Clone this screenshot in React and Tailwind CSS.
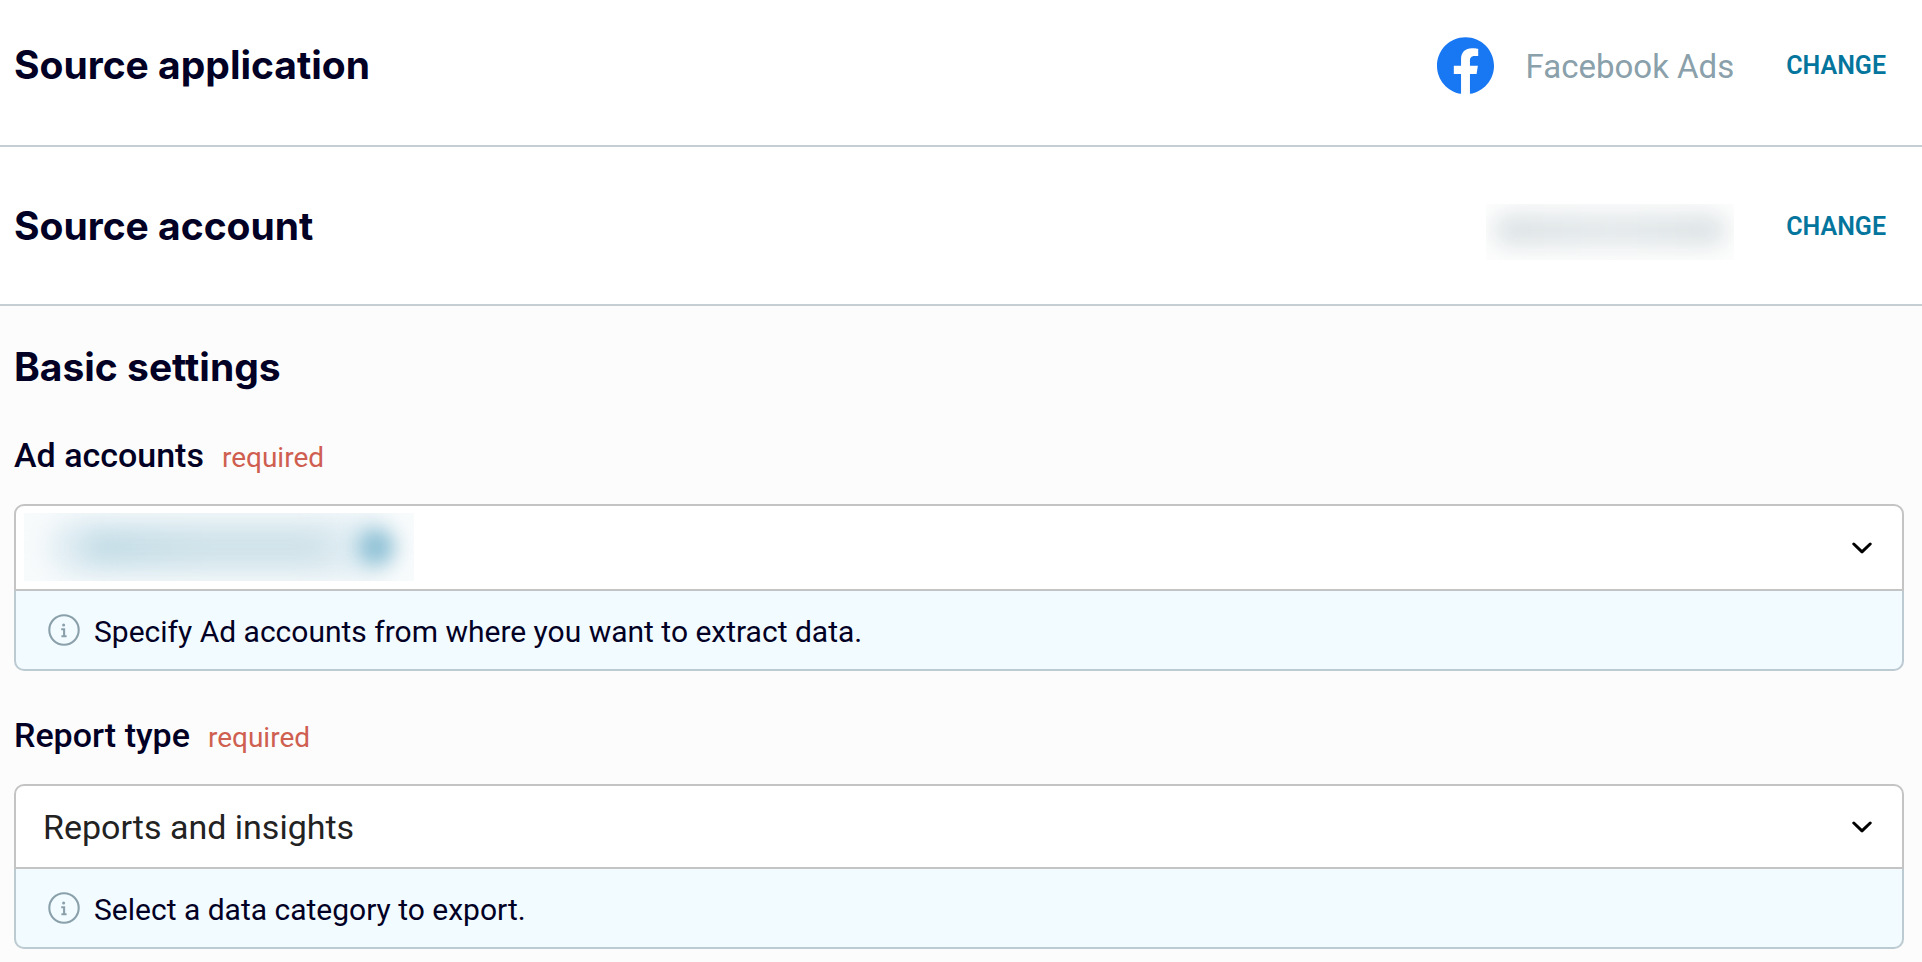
function FacebookLogo() {
  return (
    <svg viewBox="0 0 24 24" className="size-[57px] shrink-0" aria-hidden="true">
      <path
        fill="#1877f2"
        d="M24 12.073c0-6.627-5.373-12-12-12s-12 5.373-12 12c0 5.99 4.388 10.954 10.125 11.854v-8.385H7.078v-3.47h3.047V9.43c0-3.007 1.792-4.669 4.533-4.669 1.312 0 2.686.235 2.686.235v2.953H15.83c-1.491 0-1.956.925-1.956 1.874v2.25h3.328l-.532 3.47h-2.796v8.385C19.612 23.027 24 18.062 24 12.073z"
      />
    </svg>
  );
}

function InfoIcon() {
  return (
    <svg viewBox="0 0 32 32" className="size-8 shrink-0" fill="none" stroke="#8aa0aa" aria-hidden="true">
      <circle cx="16" cy="16" r="14.7" strokeWidth="2.1" />
      <circle cx="15.6" cy="11" r="1.5" fill="#8aa0aa" stroke="none" />
      <path d="M13.2 15.2h2.9v7M13.4 22.2h5.2" strokeWidth="2.1" />
    </svg>
  );
}

function Chevron() {
  return (
    <svg
      viewBox="0 0 20 12"
      className="pointer-events-none absolute top-1/2 right-8 h-3 w-5 -translate-y-1/2"
      fill="none"
      stroke="#000"
      strokeWidth="3"
      strokeLinecap="round"
      strokeLinejoin="round"
      aria-hidden="true"
    >
      <path d="M1.8 2 L10 9.8 L18.2 2" />
    </svg>
  );
}

function SourceRow({ title, className, children }) {
  return (
    <section
      className={`flex items-center justify-between border-b-2 border-[#c4ced3] bg-white pr-9 pl-[14px] ${className}`}
    >
      <h2 className="text-[39px] leading-[60px] font-bold">{title}</h2>
      <div className="flex items-center gap-[52px]">
        {children}
        <button
          type="button"
          className="pt-0.5 font-[Roboto,sans-serif] text-[25px] leading-[58px] font-semibold text-[#04759c]"
        >
          CHANGE
        </button>
      </div>
    </section>
  );
}

function Field({ id, label, hint, selectClass, option, children }) {
  return (
    <div className="font-[Roboto,sans-serif]">
      <div className="mb-6 flex items-baseline gap-[18px]">
        <label htmlFor={id} className="text-[34px] leading-[44px] font-medium">
          {label}
        </label>
        <span className="text-[28px] leading-[44px] text-[#cf5f50]">required</span>
      </div>
      <div className="relative">
        <select
          id={id}
          className={`block w-full appearance-none rounded-t-[10px] border-2 border-[#c4c4c4] bg-white pt-0.5 pl-[27px] text-[34px] text-[#222] ${selectClass}`}
        >
          <option>{option}</option>
        </select>
        {children}
        <Chevron />
      </div>
      <div className="flex h-20 items-center gap-3.5 rounded-b-[10px] border-2 border-t-0 border-[#bccad1] bg-[#f2fbff] pl-8">
        <InfoIcon />
        <p className="pt-1 text-[30px] leading-10">{hint}</p>
      </div>
    </div>
  );
}

export default function App() {
  return (
    <main className="min-h-screen bg-[#fcfcfc] font-[Inter,sans-serif] text-[#020024]">
      <SourceRow title="Source application" className="pt-[35px] pb-[50px]">
        <div className="flex items-center gap-8">
          <FacebookLogo />
          <span className="pt-1 font-[Roboto,sans-serif] text-[33px] leading-[56px] text-[#8aa0aa]">
            Facebook Ads
          </span>
        </div>
      </SourceRow>
      <SourceRow title="Source account" className="pt-[49px] pb-12">
        <div className="-mb-1 flex h-14 w-[248px] items-center self-end overflow-hidden bg-[#fdfdfd] px-2">
          <div className="mb-1 h-8 w-full rounded-full bg-linear-to-r from-[#dbe2e4] via-[#e3e8ea] to-[#dbe2e4] blur-[11px]" />
        </div>
      </SourceRow>

      <section className="flex flex-col gap-[42px] pt-[31px] pr-[18px] pl-[14px]">
        <h2 className="-mb-1.5 text-[39px] leading-[60px] font-bold">Basic settings</h2>
        <Field
          id="ad-accounts"
          label="Ad accounts"
          hint="Specify Ad accounts from where you want to extract data."
          selectClass="h-[87px]"
          option=""
        >
          <div className="pointer-events-none absolute top-[9px] left-[10px] flex h-[68px] w-[390px] items-center justify-between overflow-hidden bg-[#f8fbfc]">
            <div className="absolute inset-x-6 inset-y-1 rounded-full bg-[#e0edf3] blur-[12px]" />
            <div className="relative ml-[60px] h-6 w-[245px] rounded-full bg-linear-to-r from-[#b8d6e2] via-[#cbdfe6] to-[#cbdfe6] blur-[13px]" />
            <div className="relative mr-[20px] size-9 rounded-full bg-[#8bbfd4] blur-[10px]" />
          </div>
        </Field>
        <Field
          id="report-type"
          label="Report type"
          hint="Select a data category to export."
          selectClass="h-[85px]"
          option="Reports and insights"
        />
      </section>
    </main>
  );
}
